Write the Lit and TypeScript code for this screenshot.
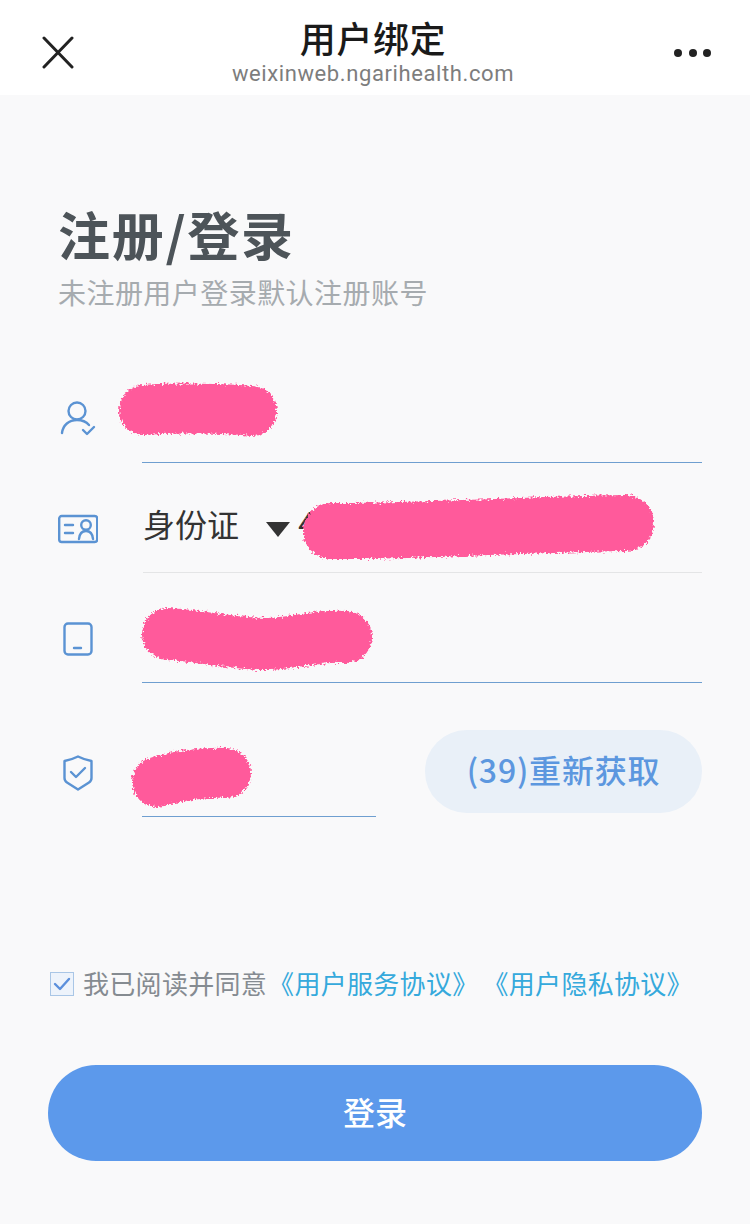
import { LitElement, html, css, svg } from "lit";
import { customElement } from "lit/decorators.js";

const STROKE = "#5b93d3";

@customElement("app-root")
export class AppRoot extends LitElement {
  static styles = css`
    :host {
      display: block;
      position: relative;
      width: 750px;
      height: 1224px;
      background: #f9f9fa;
      font-family: "Noto Sans CJK SC", "Liberation Sans", sans-serif;
      overflow: hidden;
    }
    .nav {
      height: 95px;
      background: #fff;
      display: grid;
      grid-template-columns: 113px 1fr 117px;
      align-items: center;
    }
    .close { margin: 8px 0 0 41px; display: block; }
    .more { margin: 10px 0 0 40px; display: block; }
    .nav-title { display: flex; flex-direction: column; align-items: center; }
    .nav-title b {
      font-size: 36px;
      line-height: 44px;
      font-weight: 500;
      letter-spacing: 0.6px;
      color: #1a1a1a;
      margin-top: 6px;
    }
    .nav-title span {
      font-family: Roboto, "Liberation Sans", sans-serif;
      font-size: 22px;
      line-height: 26px;
      letter-spacing: 0.6px;
      color: #7d7d7d;
      margin-top: 2px;
    }
    .main { padding: 100px 48px 0; }
    h1 {
      margin: 0 0 0 10px;
      font-size: 52px;
      line-height: 77px;
      font-weight: 700;
      letter-spacing: 1.7px;
      color: #4d5459;
    }
    .sub {
      margin: 0 0 0 10px;
      font-size: 28px;
      line-height: 40px;
      letter-spacing: 0.45px;
      color: #a6abaf;
    }
    .form { margin-top: 57px; display: flex; flex-direction: column; }
    .row {
      position: relative;
      display: flex;
      align-items: flex-end;
    }
    .ico {
      width: 94px;
      flex: none;
      display: flex;
      align-items: center;
      justify-content: center;
      padding-right: 34px;
      box-sizing: border-box;
      align-self: flex-start;
    }
    .ico svg { display: block; }
    .field { flex: 1; box-sizing: border-box; border-bottom: 1px solid #6f9fd0; }
    .r1 { height: 110px; margin-top: -16px; }
    .r2 { height: 110px; }
    .r3 { height: 110px; }
    .r4 { height: 134px; }
    .r1 .ico { padding-top: 47px; }
    .r2 .ico { padding-top: 51px; }
    .r3 .ico { padding-top: 49px; }
    .r4 .ico { padding-top: 72px; }
    .r1 .field, .r2 .field, .r3 .field { height: 110px; }
    .r2 .field {
      border-bottom-color: #e4e5e6;
      margin-left: 1px;
      display: flex;
      align-items: center;
      padding-top: 10px;
    }
    .idtype {
      font-size: 32px;
      line-height: 44px;
      color: #333;
    }
    .tri {
      width: 0;
      height: 0;
      margin-left: 27px;
      margin-top: 14px;
      border-left: 12px solid transparent;
      border-right: 12px solid transparent;
      border-top: 15px solid #333;
    }
    .digit {
      margin-left: 8px;
      font-family: Roboto, "Liberation Sans", sans-serif;
      font-size: 32px;
      line-height: 44px;
      color: #333;
    }
    .r4 .field { flex: none; width: 234px; height: 134px; }
    .code {
      position: absolute;
      left: 377px;
      top: 47px;
      width: 277px;
      height: 83px;
      box-sizing: border-box;
      padding-bottom: 5px;
      border-radius: 42px;
      background: #e9f0f8;
      color: #5c97df;
      font-size: 32px;
      font-weight: 500;
      letter-spacing: 0.8px;
      display: flex;
      align-items: center;
      justify-content: center;
    }
    .agree {
      margin-top: 147px;
      display: flex;
      align-items: center;
      font-size: 26px;
      line-height: 38px;
      letter-spacing: 0.3px;
      color: #858b91;
      white-space: nowrap;
    }
    .box {
      width: 22px;
      height: 22px;
      margin: 2px 9px 0 2px;
      flex: none;
      background: #edf3fb;
      border: 1px solid #a9c6e6;
      display: flex;
      align-items: center;
      justify-content: center;
    }
    .agree a { color: #35a9dc; letter-spacing: 0.3px; margin-left: 1px; }
    .agree a + a { margin-left: 4px; }
    .login {
      margin-top: 63px;
      height: 96px;
      box-sizing: border-box;
      padding-bottom: 5px;
      border-radius: 48px;
      background: #5c99eb;
      color: #fff;
      font-size: 32px;
      font-weight: 500;
      display: flex;
      align-items: center;
      justify-content: center;
    }
    .scribble {
      position: absolute;
      left: 0;
      top: 0;
      pointer-events: none;
    }
  `;

  private icon(w: number, h: number, body: unknown) {
    return html`<svg width=${w} height=${h} viewBox="0 0 ${w} ${h}" fill="none" stroke=${STROKE} stroke-width="2.4" stroke-linecap="round" stroke-linejoin="round">${body}</svg>`;
  }

  render() {
    return html`
      <div class="nav">
        <svg class="close" width="34" height="34" viewBox="0 0 34 34" fill="none" stroke="#222" stroke-width="3" stroke-linecap="round">
          <path d="M3 3 L31 32 M31 3 L3 32"></path>
        </svg>
        <div class="nav-title">
          <b>用户绑定</b>
          <span>weixinweb.ngarihealth.com</span>
        </div>
        <svg class="more" width="40" height="12" viewBox="0 0 40 12" fill="#222">
          <circle cx="5" cy="6" r="4"></circle>
          <circle cx="20" cy="6" r="4"></circle>
          <circle cx="34" cy="6" r="4"></circle>
        </svg>
      </div>
      <div class="main">
        <h1>注册/登录</h1>
        <p class="sub">未注册用户登录默认注册账号</p>
        <div class="form">
          <div class="row r1">
            <div class="ico">${this.icon(36, 36, svg`
              <circle cx="17" cy="11" r="8.5"></circle>
              <path d="M2 33 C3 25 9 20 17 20 C22 20 26 21.5 29 25"></path>
              <path d="M23 30 L27 34 L34 27"></path>`)}</div>
            <div class="field"></div>
          </div>
          <div class="row r2">
            <div class="ico">${this.icon(40, 30, svg`
              <rect x="1.2" y="2" width="38" height="26" rx="2.5"></rect>
              <path d="M7 11 H15 M7 19 H15"></path>
              <circle cx="28" cy="11" r="4.8"></circle>
              <path d="M21 25 C21.5 19.5 24 17 28 17 C32 17 34.5 19.5 35 25"></path>`)}</div>
            <div class="field">
              <span class="idtype">身份证</span>
              <span class="tri"></span>
              <span class="digit">4</span>
            </div>
          </div>
          <div class="row r3">
            <div class="ico">${this.icon(30, 34, svg`
              <rect x="1.5" y="1.5" width="27" height="31" rx="3.5"></rect>
              <path d="M11 26 H18"></path>`)}</div>
            <div class="field"></div>
          </div>
          <div class="row r4">
            <div class="ico">${this.icon(30, 36, svg`
              <path d="M1.5 6 C7 5 11 3.5 15 1.5 C19 3.5 23 5 28.5 6 V23 C28.5 25 27.5 26.5 26 27.5 L15 34.5 L4 27.5 C2.5 26.5 1.5 25 1.5 23 Z"></path>
              <path d="M8 17 L13 22 L22 13"></path>`)}</div>
            <div class="field"></div>
            <div class="code">(39)重新获取</div>
          </div>
        </div>
        <div class="agree">
          <span class="box">
            <svg width="18" height="16" viewBox="0 0 18 16" fill="none" stroke="#5b8fdc" stroke-width="2.4" stroke-linecap="round" stroke-linejoin="round">
              <path d="M2 8 L7 13 L16 3"></path>
            </svg>
          </span>
          <span>我已阅读并同意</span>
          <a>《用户服务协议》</a>
          <a>《用户隐私协议》</a>
        </div>
        <div class="login">登录</div>
      </div>
      <svg class="scribble" width="750" height="1224" viewBox="0 0 750 1224" fill="none" stroke="#ff5a9b" stroke-linecap="round" stroke-linejoin="round">
        <defs>
          <filter id="rough" x="-10%" y="-40%" width="120%" height="180%">
            <feTurbulence type="fractalNoise" baseFrequency="0.45" numOctaves="2" seed="4" result="n"></feTurbulence>
            <feDisplacementMap in="SourceGraphic" in2="n" scale="7" xChannelSelector="R" yChannelSelector="G"></feDisplacementMap>
          </filter>
        </defs>
        <g filter="url(#rough)">
          <path stroke-width="50" d="M144 410 C175 408 225 408 252 411"></path>
          <path stroke-width="56" d="M331 531 C400 532 480 526 626 523"></path>
          <path stroke-width="52" d="M168 634 C205 636 235 645 270 644 C300 642 320 635 346 637"></path>
          <path stroke-width="50" d="M157 782 C175 776 205 772 226 773"></path>
        </g>
      </svg>
    `;
  }
}
